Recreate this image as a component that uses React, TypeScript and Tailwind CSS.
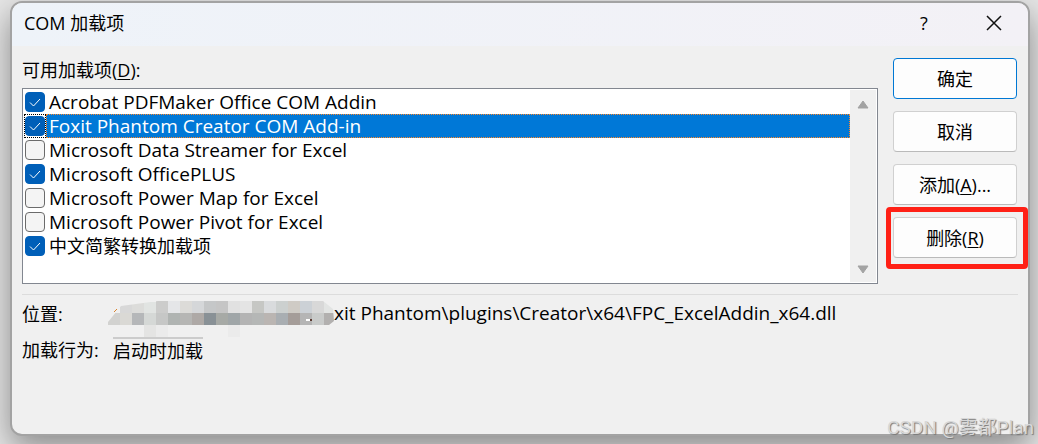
import { useState } from 'react'

const ADDINS = [
  { name: 'Acrobat PDFMaker Office COM Addin', on: true },
  { name: 'Foxit Phantom Creator COM Add-in', on: true },
  { name: 'Microsoft Data Streamer for Excel', on: false },
  { name: 'Microsoft OfficePLUS', on: true },
  { name: 'Microsoft Power Map for Excel', on: false },
  { name: 'Microsoft Power Pivot for Excel', on: false },
  { name: '中文简繁转换加载项', on: true, cjk: true },
]

// x, y, width, fill of each block that hides the start of the path
const BLOCKS: [number, number, number, string][] = [
  [12, 2, 12, '#d8d8d8'],
  [24, 2, 12, '#dcdcda'],
  [36, 1, 12, '#e1e4e2'],
  [48, 0, 12, '#cccccb'],
  [60, 0, 12, '#e5e6e8'],
  [72, 0, 12, '#dcdbd8'],
  [84, 0, 12, '#d5d7d9'],
  [96, 0, 12, '#c5c7c8'],
  [108, 0, 12, '#c5c5c5'],
  [120, 0, 12, '#e1e1e1'],
  [132, 0, 12, '#e4e4e4'],
  [144, 0, 12, '#c6c7c4'],
  [156, 0, 12, '#d9dbdd'],
  [168, 0, 12, '#ccd0cf'],
  [180, 0, 12, '#cfcbc5'],
  [192, 0, 12, '#ccd1d6'],
  [204, 0, 12, '#d8d8d8'],
  [216, 0, 12, '#e2e4e3'],
  [0, 12, 12, '#d2d2d0'],
  [12, 12, 12, '#dad9d5'],
  [24, 12, 12, '#b5b7b9'],
  [36, 12, 12, '#d5d8d6'],
  [48, 12, 12, '#c6c7c6'],
  [60, 12, 12, '#b0b4b2'],
  [72, 12, 12, '#b6b6b4'],
  [84, 12, 12, '#aea9a6'],
  [96, 12, 12, '#899196'],
  [108, 12, 12, '#a7aaa6'],
  [120, 12, 12, '#a0a6a8'],
  [132, 12, 12, '#b4b4b4'],
  [144, 12, 12, '#b5b7b6'],
  [156, 12, 12, '#bab5b2'],
  [168, 12, 12, '#a9aeb2'],
  [180, 12, 12, '#a59d99'],
  [192, 12, 12, '#b5b5b5'],
  [204, 12, 12, '#c9cbca'],
  [216, 12, 10, '#b2b0af'],
  [36, 24, 12, '#e4e4e3'],
  [48, 24, 12, '#ebebeb'],
  [120, 24, 12, '#ebebeb'],
]

const buttonClass =
  'h-[41px] w-full rounded-[4px] border border-[#d0d0d0] border-b-[#bababa] bg-[#fdfdfd] text-center hover:bg-[#e8f2fb]'

function Mosaic() {
  return (
    <svg className="block h-9 w-[226px] shrink-0" viewBox="0 0 226 36" aria-hidden="true">
      <clipPath id="mosaic">
        <path d="M0 21 L13 5 L50 0 H215 L225 8 L226 20 L221 24 H132 V36 H120 V24 H60 V36 H36 V24 H0 Z" />
      </clipPath>
      <g clipPath="url(#mosaic)" shapeRendering="crispEdges">
        {BLOCKS.map(([x, y, w, fill]) => (
          <rect key={`${x}-${y}`} x={x} y={y} width={w} height={y < 12 ? 12 - y : 12} fill={fill} />
        ))}
      </g>
      <path d="M6 11 L9 8" stroke="#d9822b" strokeWidth="1" />
      <rect x="198" y="18" width="4" height="2" fill="#fff" />
      <rect x="202" y="18" width="2" height="2" fill="#5a3a32" />
    </svg>
  )
}

export default function App() {
  const [checked, setChecked] = useState(ADDINS.map((a) => a.on))
  const [selected, setSelected] = useState(1)

  function toggle(i: number) {
    setSelected(i)
    setChecked((prev) => prev.map((c, n) => (n === i ? !c : c)))
  }

  return (
    <div className="relative flex min-h-screen overflow-hidden bg-[#e6e6e6] pt-px pr-2 pb-2 pl-[10px] font-['Open_Sans','Noto_Sans_CJK_SC',sans-serif] text-[18px] leading-6 text-black">
      <section className="flex flex-1 flex-col rounded-xl border-2 border-[#a3a3a3] bg-[#f0f0f0] shadow-[0_12px_32px_rgba(0,0,0,0.4)]">
        {/* Title bar */}
        <header className="flex h-[43px] items-center rounded-t-[10px] bg-linear-to-r from-[#eef3f9] to-[#f3f1f6] pr-3 pl-3">
          <h1 className="flex-1 pb-1">COM 加载项</h1>
          <button aria-label="Help" className="h-8 w-10 pb-1">
            ?
          </button>
          <button aria-label="Close" className="ml-7 flex h-8 w-11 items-center justify-center pb-1">
            <svg className="size-4" viewBox="0 0 16 16" stroke="#111" strokeWidth="1.5" aria-hidden="true">
              <path d="M1 1 L15 15 M15 1 L1 15" />
            </svg>
          </button>
        </header>

        <div className="flex gap-[15px] pt-3 pr-[11px] pl-[10px]">
          <div className="flex-1">
            <h2 id="list-label" className="mb-[6px]">
              可用加载项(<u className="underline-offset-2">D</u>):
            </h2>
            <div className="flex h-[196px] border border-[#828790] bg-white p-px" aria-labelledby="list-label" role="group">
              <ul className="flex-1">
                {ADDINS.map((a, i) => (
                  <li key={a.name}>
                    <label className="flex h-6 items-center">
                      <span
                        className={`flex h-6 w-[22px] items-center justify-center border border-dotted ${
                          selected === i ? 'border-black' : 'border-transparent'
                        }`}
                      >
                        <input
                          type="checkbox"
                          checked={checked[i]}
                          onChange={() => toggle(i)}
                          className="peer size-5 shrink-0 appearance-none rounded-[4px] border border-[#6b6b6b] bg-[#f4f4f4] checked:border-[#005fb8] checked:bg-[#005fb8]"
                        />
                        <svg
                          className="pointer-events-none absolute hidden size-5 peer-checked:block"
                          viewBox="0 0 20 20"
                          fill="none"
                          stroke="#fff"
                          aria-hidden="true"
                        >
                          <path d="M5 10.5 L8.5 14 L15 7" />
                        </svg>
                      </span>
                      <span
                        className={`flex h-6 flex-1 items-center border border-dotted pl-[2px] ${
                          a.cjk ? 'text-[18px]' : 'text-[19px]'
                        } ${selected === i ? 'border-[#ff8728] bg-[#0078d7] text-white' : 'border-transparent'}`}
                      >
                        {a.name}
                      </span>
                    </label>
                  </li>
                ))}
              </ul>
              {/* Scroll bar */}
              <div className="flex w-[26px] flex-col items-center justify-between bg-[#f0f0f0] pt-[10px] pb-2">
                <svg className="h-[9px] w-3" viewBox="0 0 12 9" aria-hidden="true">
                  <path d="M6 1 L11 8 H1 Z" fill="#a3a3a3" stroke="#a3a3a3" strokeLinejoin="round" />
                </svg>
                <svg className="h-[9px] w-3" viewBox="0 0 12 9" aria-hidden="true">
                  <path d="M6 8 L11 1 H1 Z" fill="#a3a3a3" stroke="#a3a3a3" strokeLinejoin="round" />
                </svg>
              </div>
            </div>
          </div>

          <div className="flex w-[124px] flex-col gap-3">
            <button className="h-[41px] w-full rounded-[4px] border border-[#0078d4] bg-[#fdfdfd] text-center">确定</button>
            <button className={buttonClass}>取消</button>
            <button className={buttonClass}>
              添加(<u className="underline-offset-2">A</u>)...
            </button>
            <div className="relative">
              <button className={buttonClass}>
                删除(<u className="underline-offset-2">R</u>)
              </button>
              <div className="pointer-events-none absolute -top-[10px] -right-[11px] -bottom-[11px] -left-[7px] rounded-[4px] border-5 border-[#ff2015]" />
            </div>
          </div>
        </div>

        <dl className="mx-[10px] mt-[10px] border-t border-[#dcdcdc] pt-[6px]">
          <div className="flex h-9">
            <dt className="w-[86px] pt-px">位置:</dt>
            <dd className="flex text-[19px]">
              <Mosaic />
              xit Phantom\plugins\Creator\x64\FPC_ExcelAddin_x64.dll
            </dd>
          </div>
          <div className="flex h-9 items-start">
            <dt className="w-[91px] pt-px">加载行为:</dt>
            <dd className="border-t-2 border-[#cccccc]">启动时加载</dd>
          </div>
        </dl>
      </section>

      <p className="pointer-events-none absolute right-1 bottom-1 font-['Roboto','Noto_Sans_CJK_SC',sans-serif] text-[19px] text-[#d8d8d8] [text-shadow:1px_1px_1px_#777]">
        CSDN @雾都Plan
      </p>
    </div>
  )
}
